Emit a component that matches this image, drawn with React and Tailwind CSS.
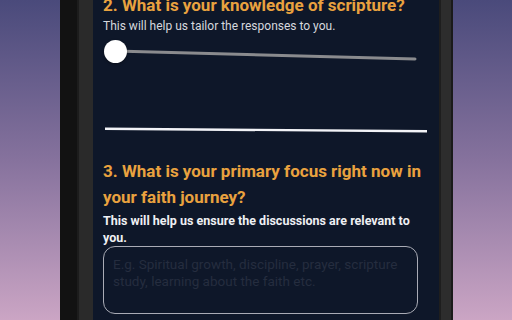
import React from 'react';

export default function App() {
  return (
    <div className="w-[512px] h-[320px] overflow-hidden bg-gradient-to-b from-[#4a4a7b] via-[#86729d] to-[#cba5c4] flex">
      {/* phone frame, left side */}
      <div className="ml-[60px] flex h-full">
        <div className="w-[17px] bg-[#121212]" />
        <div className="w-[2px] bg-[#1c1c1c]" />
        <div className="w-[14px] bg-[#2a2a2a]" />
      </div>

      {/* screen */}
      <div
        className="w-[346px] h-full bg-[#0e1729] pl-[10px] pr-[10px]"
        style={{ fontFamily: 'Roboto, "Noto Sans", sans-serif' }}
      >
        <h2 className="-mt-[8px] text-[17px] leading-[26px] font-bold text-[#e9a23f] whitespace-nowrap">
          2. What is your knowledge of scripture?
        </h2>
        <p className="mt-[0px] text-[12px] leading-[16px] text-[#d6d8de]">
          This will help us tailor the responses to you.
        </p>

        {/* slider */}
        <div className="relative mt-[6px] h-[24px]">
          <svg className="absolute left-[12px] top-0" width="312" height="24" viewBox="0 0 312 24">
            <line x1="0" y1="11" x2="300" y2="19" stroke="#8a8b8e" strokeWidth="3" strokeLinecap="round" />
          </svg>
          <div className="absolute left-[1px] top-0 w-[23px] h-[23px] rounded-full bg-white shadow-[0_1px_3px_rgba(0,0,0,0.4)]" />
        </div>

        {/* divider */}
        <svg className="mt-[63px] ml-[2px] block" width="324" height="6" viewBox="0 0 324 6">
          <line x1="0" y1="1.8" x2="322" y2="4.2" stroke="#f2f3f7" strokeWidth="2.4" />
        </svg>

        <h2 className="mt-[25px] text-[17px] leading-[26px] font-bold text-[#e9a23f] whitespace-nowrap">
          3. What is your primary focus right now in
          <br />
          your faith journey?
        </h2>
        <p className="mt-[2px] text-[12.5px] leading-[17px] font-bold text-[#eef0f4]">
          This will help us ensure the discussions are relevant to you.
        </p>

        <div className="mt-[0px] w-[315px] h-[68px] rounded-[12px] border-[1.5px] border-[#a9abb5] px-[9px] py-[9px]">
          <p className="text-[13.5px] leading-[17px] text-[#252d3f]">
            E.g. Spiritual growth, discipline, prayer, scripture study, learning about the faith etc.
          </p>
        </div>
      </div>

      {/* phone frame, right side */}
      <div className="flex h-full">
        <div className="w-[2px] bg-[#1e1e1e]" />
        <div className="w-[10px] bg-[#2d2d2d]" />
        <div className="w-[2px] bg-[#1a1a1a]" />
      </div>
    </div>
  );
}
